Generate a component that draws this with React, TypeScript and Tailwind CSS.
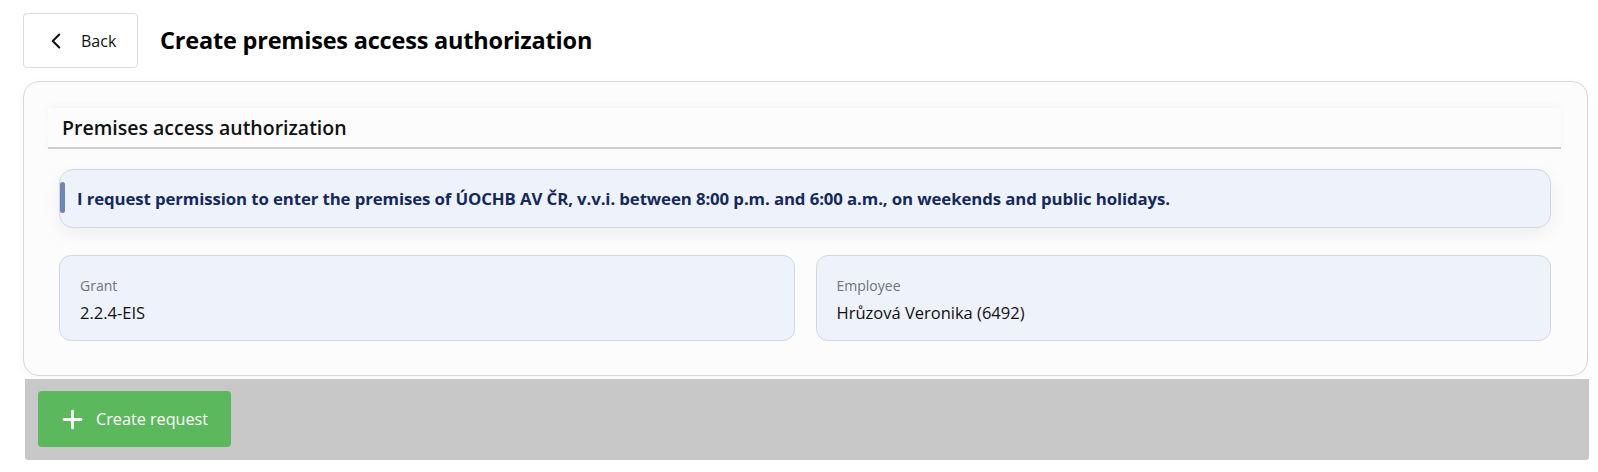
import { ChevronLeft, Plus } from 'lucide-react'

const font = { fontFamily: '"Open Sans", "Noto Sans", sans-serif' }

function Field(props: { label: string; value: string }) {
  return (
    <div className="flex h-[86px] flex-1 flex-col rounded-xl border border-[#d3d7df] bg-[#eef2fa] px-5 pt-[20px]">
      <span className="text-[14px] leading-[19px] text-[#6f737a]">{props.label}</span>
      <span className="mt-[7px] text-[16.5px] leading-[22px] text-[#111]">{props.value}</span>
    </div>
  )
}

export default function App() {
  return (
    <div className="min-h-[472px] bg-white pl-[23px] pr-[10px] pt-[13px] text-[#111]" style={font}>
      <div className="flex items-center">
        <button className="flex h-[55px] w-[115px] items-center gap-[12px] rounded-[4px] border border-[#dcdcdc] bg-white pl-[19px]">
          <ChevronLeft size={26} strokeWidth={1.9} className="text-[#111]" />
          <span className="text-[16px]">Back</span>
        </button>
        <h1 className="ml-[22px] text-[23.5px] font-bold tracking-[-0.2px] text-black">
          Create premises access authorization
        </h1>
      </div>

      <div className="mt-[13px] rounded-2xl border border-[#d8d8d8] bg-[#fcfcfc] pb-[34px] pt-[26px] shadow-[0_2px_10px_rgba(0,0,0,0.04)]">
        <div className="ml-[24px] mr-[26px] flex h-[41px] items-center border-b-2 border-[#cdcdcd] bg-[#fcfcfc] px-[14px] shadow-[0_-2px_8px_rgba(0,0,0,0.04)]">
          <span className="text-[19.5px] font-semibold text-[#111]">Premises access authorization</span>
        </div>

        <div className="ml-[35px] mr-[36px]">
          <div className="relative mt-[20px] flex h-[59px] items-center rounded-[14px] border border-[#d3d7df] bg-[#eef2fa] pl-[17px] shadow-[0_6px_18px_rgba(0,0,0,0.06)]">
            <span className="absolute left-0 top-[12px] h-[31px] w-[5px] rounded-full bg-[#6c86b8]" />
            <span className="text-[16.8px] font-bold tracking-[-0.1px] text-[#14295e]">
              I request permission to enter the premises of ÚOCHB AV ČR, v.v.i. between 8:00 p.m. and 6:00 a.m., on weekends and public holidays.
            </span>
          </div>

          <div className="mt-[27px] flex gap-[21px]">
            <Field label="Grant" value="2.2.4-EIS" />
            <Field label="Employee" value="Hrůzová Veronika (6492)" />
          </div>
        </div>
      </div>

      <div className="ml-[2px] mr-[-1px] mt-[3px] flex h-[81px] items-start rounded-b-[3px] bg-[#c8c8c8] pl-[13px] pt-[12px]">
        <button className="flex h-[56px] w-[193px] items-center gap-[9px] rounded-[4px] bg-[#5cb85c] pl-[20px] text-white">
          <Plus size={29} strokeWidth={2.3} />
          <span className="text-[16.2px]">Create request</span>
        </button>
      </div>
    </div>
  )
}
